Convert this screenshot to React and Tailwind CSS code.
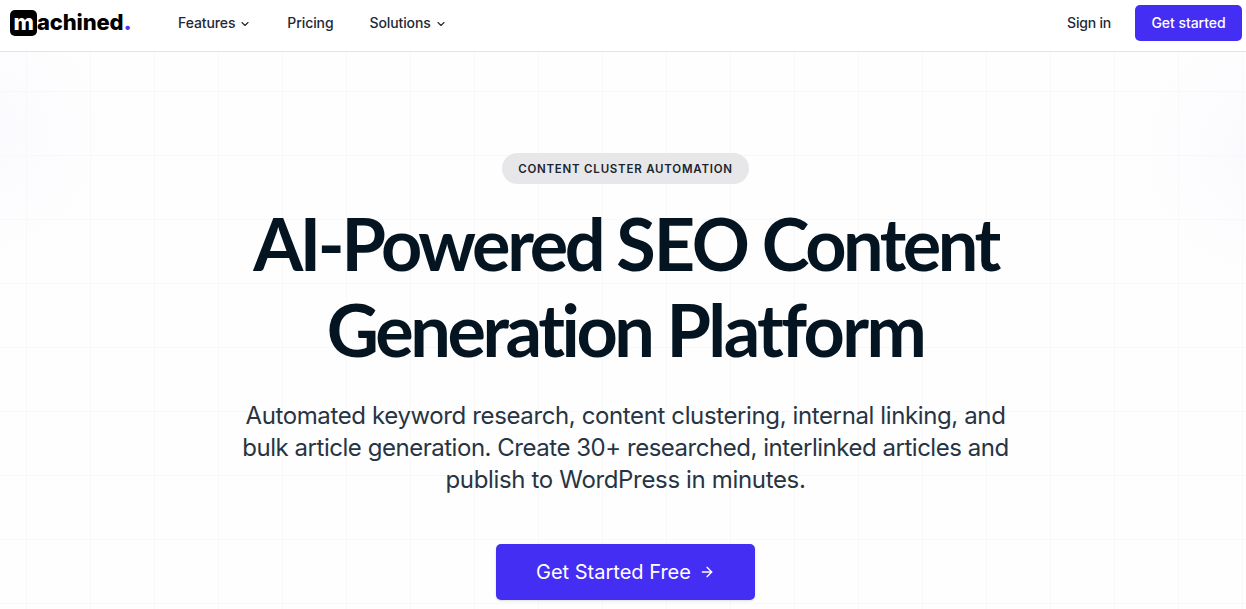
import React from 'react';
import { ArrowRight, ChevronDown } from 'lucide-react';

const NAV = [
  { label: 'Features', menu: true },
  { label: 'Pricing', menu: false },
  { label: 'Solutions', menu: true },
];

function Logo() {
  return (
    <a href="#" className="flex h-[26px] w-[120px] items-center text-[22px] font-extrabold leading-[26px] tracking-[-0.3px] text-black">
      <span className="flex h-[26px] w-[27px] shrink-0 items-center justify-center rounded-[5px] bg-black text-white">
        <span className="-mt-[2px]">m</span>
      </span>
      <span className="-mt-[3px] font-extrabold tracking-[-0.15px]">achined</span>
      <span className="-mt-[3px] font-black text-[#4f35e8]">.</span>
    </a>
  );
}

function Header() {
  return (
    <header className="flex h-[52px] items-start border-b border-[#e2e3e5] bg-white pl-[10px] pr-1">
      <div className="mt-[10px]">
        <Logo />
      </div>
      <nav className="ml-12 flex h-[46px] items-center gap-9 text-sm font-medium text-[#1d2935]">
        {NAV.map((n) => (
          <a key={n.label} href="#" className="flex items-center gap-1 tracking-[-0.1px]">
            {n.label}
            {n.menu && <ChevronDown size={12} strokeWidth={2.2} className="mt-0.5" />}
          </a>
        ))}
      </nav>
      <div className="ml-auto mt-[5px] flex h-9 items-center gap-6 text-sm font-medium">
        <a href="#" className="tracking-[-0.2px] text-[#1d2935]">Sign in</a>
        <button className="h-9 w-[107px] rounded-[5px] bg-[#442ef4] tracking-[-0.05px] text-white">Get started</button>
      </div>
    </header>
  );
}

function Hero() {
  return (
    <section className="relative flex h-[557px] flex-col items-center overflow-hidden bg-[#fefefe] pl-[5px]">
      {/* Grid and corner glows */}
      <div className="absolute inset-0 bg-[radial-gradient(circle_at_-20px_80px,#fafaff_0,transparent_130px),radial-gradient(circle_at_1266px_100px,#fafaff_0,transparent_130px)]" />
      <div className="absolute inset-0 bg-[linear-gradient(to_right,#f8f8f9_1px,transparent_1px),linear-gradient(to_bottom,#f8f8f9_1px,transparent_1px)] bg-[size:64px_64px] bg-[position:26px_39px]" />

      <div className="relative mt-[101px] flex h-[31px] w-[247px] items-center justify-center rounded-full bg-[#e7e7e9] pt-[2px] text-[11.5px] font-semibold tracking-[0.77px] text-[#1a2430]">
        CONTENT CLUSTER AUTOMATION
      </div>

      <h1 className="relative mt-4 whitespace-nowrap text-center font-['Lato'] text-[72px] font-bold leading-[86px] text-[#041420]">
        <span className="block tracking-[-3.45px]">
          <span className="tracking-[-3.35px]">AI-Powered</span> <span className="tracking-[-2.2px]">SEO</span> Content
        </span>
        <span className="block tracking-[-2.6px]">
          <span className="tracking-[-3.4px]">Generation</span> Platform
        </span>
      </h1>

      <p className="relative mt-7 whitespace-nowrap text-center text-2xl leading-8 text-[#273444]">
        <span className="block tracking-[-0.38px]">Automated keyword research, content clustering, internal linking, and</span>
        <span className="block tracking-[-0.47px]">bulk article generation. Create 30+ researched, interlinked articles and</span>
        <span className="block tracking-[-0.34px]">publish to WordPress in minutes.</span>
      </p>

      <button className="relative mt-12 flex h-14 w-[259px] shrink-0 items-center justify-center gap-2 rounded-[5px] bg-[#442ef4] text-xl text-white shadow-sm">
        <span>Get Started Free</span>
        <ArrowRight size={16} strokeWidth={2} />
      </button>
    </section>
  );
}

export default function App() {
  return (
    <div className="h-[609px] overflow-hidden bg-white font-['Inter',sans-serif]">
      <Header />
      <Hero />
    </div>
  );
}
